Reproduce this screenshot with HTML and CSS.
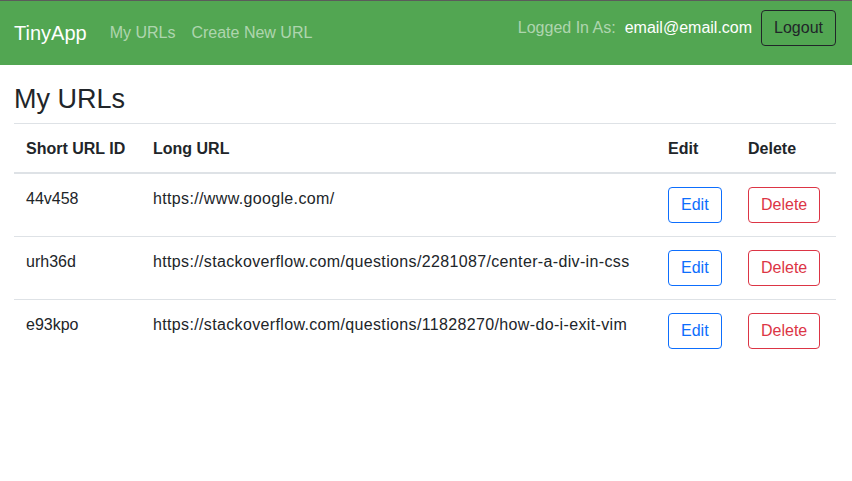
FILE: index.html
```html
<!DOCTYPE html>
<html>
<head>
<meta charset="utf-8">
<link rel="stylesheet" href="styles.css">
</head>
<body>
<nav class="navbar">
  <div class="nav-left">
    <a class="brand">TinyApp</a>
    <a class="nav-link">My URLs</a>
    <a class="nav-link">Create New URL</a>
  </div>
  <div class="nav-right">
    <span class="nav-muted">Logged In As:</span>
    <span class="nav-user">email@email.com</span>
    <button class="btn btn-dark-outline">Logout</button>
  </div>
</nav>
<main class="main">
  <h3 class="title">My URLs</h3>
  <table class="table">
    <thead>
      <tr>
        <th class="c-id">Short URL ID</th>
        <th class="c-long">Long URL</th>
        <th class="c-edit">Edit</th>
        <th class="c-del">Delete</th>
      </tr>
    </thead>
    <tbody>
      <tr>
        <td>44v458</td>
        <td class="url">https://www.google.com/</td>
        <td><button class="btn btn-blue">Edit</button></td>
        <td><button class="btn btn-red">Delete</button></td>
      </tr>
      <tr>
        <td>urh36d</td>
        <td class="url">https://stackoverflow.com/questions/2281087/center-a-div-in-css</td>
        <td><button class="btn btn-blue">Edit</button></td>
        <td><button class="btn btn-red">Delete</button></td>
      </tr>
      <tr>
        <td>e93kpo</td>
        <td class="url">https://stackoverflow.com/questions/11828270/how-do-i-exit-vim</td>
        <td><button class="btn btn-blue">Edit</button></td>
        <td><button class="btn btn-red">Delete</button></td>
      </tr>
    </tbody>
  </table>
</main>
</body>
</html>
```
FILE: styles.css
```css
* { box-sizing: border-box; }
html, body { margin: 0; padding: 0; background: #fff; }
body {
  font-family: "Liberation Sans", Arial, sans-serif;
  font-size: 16px;
  line-height: 1.5;
  color: #212529;
  border-top: 1px solid #5b5b5b;
}
.navbar {
  height: 64px;
  background: #52a652;
  display: flex;
  align-items: center;
  justify-content: space-between;
  padding: 0 16px 0 14px;
}
.nav-left, .nav-right { display: flex; align-items: center; }
.nav-right { align-self: flex-start; padding-top: 9px; }
.brand { color: #fff; font-size: 20px; margin-right: 23px; }
.nav-link { color: rgba(255,255,255,0.55); margin-right: 16px; }
.nav-muted { color: rgba(255,255,255,0.55); margin-right: 9px; }
.nav-user { color: #fff; margin-right: 9px; }
.btn {
  font-family: inherit;
  font-size: 16px;
  line-height: 1.5;
  padding: 5px 12px;
  border-radius: 4px;
  background: transparent;
  border: 1px solid;
  cursor: pointer;
}
.btn-dark-outline { color: #212529; border-color: #212529; }
.btn-blue { color: #0d6efd; border-color: #0d6efd; }
.btn-red { color: #dc3545; border-color: #dc3545; }
.main { padding: 0 16px 0 14px; }
.title { font-size: 27px; font-weight: 500; margin: 18px 0 8px; line-height: 1.2; }
.table { width: 100%; border-collapse: collapse; border-top: 1px solid #dee2e6; }
.table th, .table td {
  text-align: left;
  vertical-align: top;
  padding: 13px 12px 13px;
  border-bottom: 1px solid #dee2e6;
}
.table th { font-weight: 700; padding: 13px 12px 11px; }
.table thead th { border-bottom: 2px solid #dee2e6; }
.table tbody tr:last-child td { border-bottom: none; }
.url { letter-spacing: 0.35px; }
.c-id { width: 127px; }
.c-long { width: 515px; }
.c-edit { width: 80px; }
.c-del { width: 100px; }
```
